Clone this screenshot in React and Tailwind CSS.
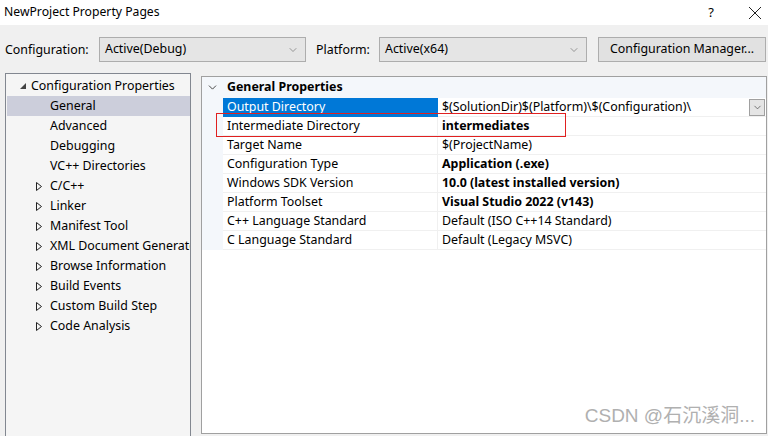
import { ChevronDown } from 'lucide-react';

const treeItems = [
  { label: 'General', expand: false, selected: true },
  { label: 'Advanced', expand: false },
  { label: 'Debugging', expand: false },
  { label: 'VC++ Directories', expand: false },
  { label: 'C/C++', expand: true },
  { label: 'Linker', expand: true },
  { label: 'Manifest Tool', expand: true },
  { label: 'XML Document Generator', expand: true },
  { label: 'Browse Information', expand: true },
  { label: 'Build Events', expand: true },
  { label: 'Custom Build Step', expand: true },
  { label: 'Code Analysis', expand: true },
];

const props = [
  { name: 'Output Directory', value: '$(SolutionDir)$(Platform)\\$(Configuration)\\', selected: true },
  { name: 'Intermediate Directory', value: 'intermediates', bold: true },
  { name: 'Target Name', value: '$(ProjectName)' },
  { name: 'Configuration Type', value: 'Application (.exe)', bold: true },
  { name: 'Windows SDK Version', value: '10.0 (latest installed version)', bold: true },
  { name: 'Platform Toolset', value: 'Visual Studio 2022 (v143)', bold: true },
  { name: 'C++ Language Standard', value: 'Default (ISO C++14 Standard)' },
  { name: 'C Language Standard', value: 'Default (Legacy MSVC)' },
];

function Combo({ text, width }) {
  return (
    <div className={`${width} h-[25px] flex items-center justify-between bg-[#e5e5e5] border border-[#adadad] pl-[5px] pr-[6px]`}>
      <span>{text}</span>
      <ChevronDown size={12} strokeWidth={1.2} className="text-[#606060]" />
    </div>
  );
}

export default function App() {
  return (
    <div className="w-[768px] h-[436px] overflow-hidden bg-[#f0f0f0] text-[12.4px] text-black relative" style={{ fontFamily: '"Noto Sans", "Noto Sans CJK SC", sans-serif' }}>
      {/* title bar */}
      <div className="h-[25px] bg-white flex items-center justify-between pl-[4px]">
        <span className="text-[12.2px]">NewProject Property Pages</span>
        <div className="flex items-center">
          <span className="w-[46px] text-center text-[13px]">?</span>
          <svg width="34" height="14" viewBox="0 0 34 14">
            <path d="M15 1 L27 13 M27 1 L15 13" stroke="#222" strokeWidth="1" fill="none" />
          </svg>
        </div>
      </div>

      {/* configuration row */}
      <div className="flex items-center mt-[12px] pl-[5px] h-[25px]">
        <span className="w-[94px] pt-[1px]">Configuration:</span>
        <Combo text="Active(Debug)" width="w-[207px]" />
        <span className="ml-[10px] w-[63px] pt-[1px]">Platform:</span>
        <Combo text="Active(x64)" width="w-[208px]" />
        <div className="ml-[11px] w-[168px] h-[25px] flex items-center justify-center bg-[#e1e1e1] border border-[#adadad]">
          Configuration Manager...
        </div>
      </div>

      <div className="flex mt-[11px]">
        {/* tree */}
        <div className="ml-[5px] w-[186px] h-[370px] bg-[#f5f5f5] border border-b-0 border-[#828790] pt-[2px] overflow-hidden whitespace-nowrap">
          <div className="h-[20px] flex items-center">
            <svg width="8" height="8" viewBox="0 0 8 8" className="ml-[13px] mr-[4px] shrink-0">
              <path d="M7 1 L7 7 L1 7 Z" fill="#444" />
            </svg>
            <span>Configuration Properties</span>
          </div>
          {treeItems.map((item) => (
            <div key={item.label} className={`h-[20px] flex items-center ml-[1px] ${item.selected ? 'bg-[#cccedb]' : ''}`}>
              <span className="w-[43px] shrink-0 flex justify-end pr-[8px]">
                {item.expand && (
                  <svg width="6" height="9" viewBox="0 0 6 9">
                    <path d="M0.5 0.5 L5.5 4.5 L0.5 8.5 Z" fill="none" stroke="#222" strokeWidth="1" />
                  </svg>
                )}
              </span>
              <span>{item.label}</span>
            </div>
          ))}
        </div>

        {/* property grid */}
        <div className="ml-[10px] mt-[3px] w-[566px] h-[358px] bg-white border border-[#a0a0a0] overflow-hidden">
          <div className="h-[21px] flex items-center bg-[#f4f7fb]">
            <ChevronDown size={13} strokeWidth={1.8} className="ml-[4px] mr-[8px] text-[#444]" />
            <span className="font-bold">General Properties</span>
          </div>
          {props.map((p) => (
            <div key={p.name} className="flex h-[19px]">
              <div className="w-[21px] bg-[#f4f7fb]" />
              <div className={`w-[215px] pl-[4px] flex items-center border-b border-r ${p.selected ? 'bg-[#0078d7] text-white border-[#0078d7]' : 'border-[#f0f0f0]'}`}>
                {p.name}
              </div>
              <div className={`flex-1 flex items-center justify-between pl-[4px] border-b border-[#f0f0f0] ${p.bold ? 'font-bold' : ''}`}>
                <span>{p.value}</span>
                {p.selected && (
                  <div className="w-[16px] h-[17px] bg-[#e5e5e5] border border-[#a0a0a0] flex items-center justify-center mr-[1px]">
                    <ChevronDown size={11} strokeWidth={1.5} className="text-[#444]" />
                  </div>
                )}
              </div>
            </div>
          ))}
        </div>
      </div>

      {/* highlight box */}
      <div className="absolute left-[216px] top-[113px] w-[350px] h-[24px] border border-[#e02020]" />

      {/* watermark */}
      <div className="absolute right-[13px] bottom-[6px] text-[19px] text-[#b0b0b0]" style={{ fontFamily: '"Liberation Sans", "Noto Sans CJK SC", sans-serif', textShadow: '0 0 1px #fff, 1px 1px 0 #fff' }}>
        CSDN @石沉溪洞...
      </div>
    </div>
  );
}
